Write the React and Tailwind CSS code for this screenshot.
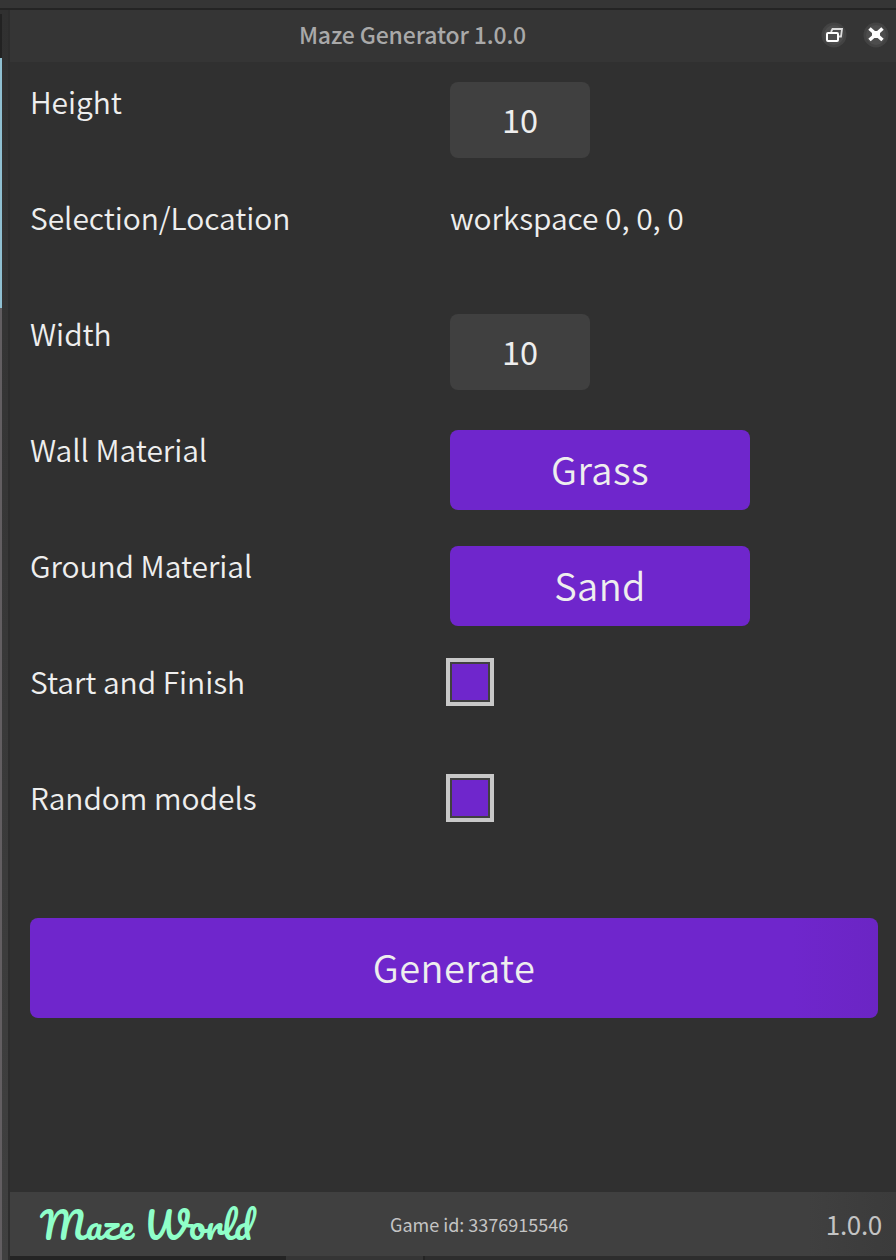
import React from 'react';

const settings = [
  { label: 'Height', kind: 'input', value: '10' },
  { label: 'Selection/Location', kind: 'text', value: 'workspace 0, 0, 0' },
  { label: 'Width', kind: 'input', value: '10' },
  { label: 'Wall Material', kind: 'button', value: 'Grass' },
  { label: 'Ground Material', kind: 'button', value: 'Sand' },
  { label: 'Start and Finish', kind: 'check' },
  { label: 'Random models', kind: 'check' },
];

function Control({ kind, value }) {
  if (kind === 'input')
    return (
      <input
        aria-label="Size"
        defaultValue={value}
        className="h-[76px] w-[140px] rounded-lg bg-[#404040] pb-1 text-center text-[32.5px] text-[#eeeeee] outline-none"
      />
    );
  if (kind === 'text') return <span className="text-[30px] leading-[38px] font-[350] tracking-[-0.05px]">{value}</span>;
  if (kind === 'button')
    return (
      <button className="flex h-20 w-[300px] items-center justify-center rounded-lg bg-[#6f26cc] pb-0.5 text-[38px] leading-none font-[350] tracking-[0.4px]">
        {value}
      </button>
    );
  return (
    <button
      aria-label="Toggle"
      className="-mt-1 -ml-1 size-12 border-4 border-[#c8c8c8] bg-[#404040] p-[2px]"
    >
      <span className="block size-full bg-[#6f26cc]" />
    </button>
  );
}

export default function App() {
  return (
    <div className="flex h-[1260px] w-[896px] flex-col overflow-hidden bg-[#303030] font-['Noto_Sans_CJK_SC','Noto_Sans',sans-serif] text-[#eeeeee]">
      <div className="h-2.5 shrink-0 border-b-2 border-[#242424] bg-[#353535]" />
      <div className="flex min-h-0 flex-1">
        <div className="flex w-2.5 shrink-0 border-r-2 border-[#2d2d2d] bg-linear-to-b from-[#303030] to-[#404040]">
          <div className="flex w-0.5 flex-col">
            <div className="h-1 bg-[#303030]" />
            <div className="h-11 bg-[#222222]" />
            <div className="h-[250px] bg-[#8fbfd1]" />
            <div className="flex-1 bg-[#625e61]" />
          </div>
        </div>
        <div className="flex min-w-0 flex-1 flex-col">
          <header className="flex h-[52px] shrink-0 items-center bg-[#353535] pr-[7px]">
            <h1 className="flex-1 pr-1.5 pb-1 text-center text-[23px] leading-none font-medium tracking-[-0.15px] text-[#a9a9a9]">
              Maze Generator 1.0.0
            </h1>
            <svg className="-mt-0.5 size-[26px]" viewBox="0 0 26 26" fill="none">
              <circle cx="13" cy="13" r="12.5" fill="#434343" />
              <circle cx="13" cy="13" r="10" fill="#4d4d4d" />
              <path d="M10 10L11.5 7H21L20 14.5H17" stroke="#dddddd" strokeWidth="1.8" />
              <rect x="6" y="11" width="11" height="8" rx="1" stroke="#fff" strokeWidth="2" />
            </svg>
            <svg className="-mt-0.5 ml-4 size-[26px]" viewBox="0 0 26 26" fill="none">
              <circle cx="13" cy="13" r="12.5" fill="#434343" />
              <circle cx="13" cy="13" r="10" fill="#4d4d4d" />
              <path d="M6.5 6.5L19.5 18M19.5 6.5L6.5 18" stroke="#fff" strokeWidth="3.6" />
              <path d="M9 9H17V16H9Z" fill="#fff" />
            </svg>
          </header>
          <main className="flex-1 px-5 pt-5">
            {settings.map((s) => (
              <div key={s.label} className="flex h-[116px] items-start">
                <span className="w-[420px] text-[30px] leading-[38px] font-[350] tracking-[-0.05px]">{s.label}</span>
                <Control kind={s.kind} value={s.value} />
              </div>
            ))}
            <button className="mt-6 flex h-[100px] w-[848px] items-center justify-center rounded-lg bg-linear-to-r from-[#6f26cc] from-90% to-[#6b25c4] pb-0.5 text-[38px] leading-none font-[350] tracking-[0.4px]">
              Generate
            </button>
          </main>
          <footer className="grid h-16 shrink-0 grid-cols-[350px_1fr_auto] items-center bg-linear-to-r from-[#404040] from-90% to-[#3b3b3b] pr-3.5 pl-[30px] text-[#c4c4c4]">
            <span className="font-['Pacifico',cursive] text-[37px] leading-none whitespace-nowrap text-[#8fffc9]">
              Maze World
            </span>
            <span className="text-[18px] leading-none">Game id: 3376915546</span>
            <span className="text-[26px] leading-none tracking-[-0.3px]">1.0.0</span>
          </footer>
          <div className="flex h-1 shrink-0 bg-[#2d2d2d]">
            <div className="w-[276px] bg-[#242424]" />
            <div className="w-[139px] border-r-2 border-[#242424] bg-[#353535]" />
          </div>
        </div>
      </div>
    </div>
  );
}
